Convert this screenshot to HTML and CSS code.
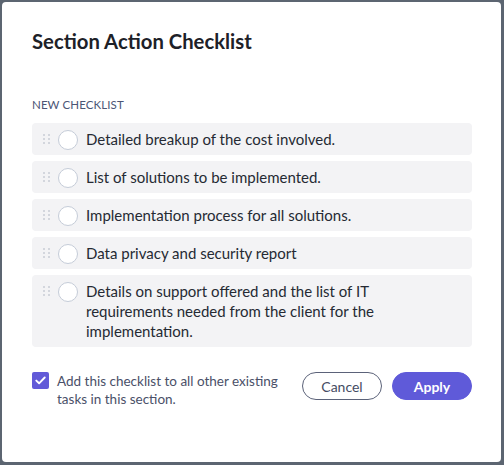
FILE: index.html
```html
<!DOCTYPE html>
<html lang="en">
<head>
<meta charset="utf-8">
<title>Section Action Checklist</title>
<link rel="stylesheet" href="styles.css">
</head>
<body>
<div class="backdrop">
  <div class="modal">
    <h1 class="title">Section Action Checklist</h1>
    <div class="section-label">NEW CHECKLIST</div>
    <ul class="checklist">
      <li class="item">
        <span class="handle"><i></i><i></i><i></i><i></i><i></i><i></i></span>
        <span class="circle"></span>
        <span class="text">Detailed breakup of the cost involved.</span>
      </li>
      <li class="item">
        <span class="handle"><i></i><i></i><i></i><i></i><i></i><i></i></span>
        <span class="circle"></span>
        <span class="text">List of solutions to be implemented.</span>
      </li>
      <li class="item">
        <span class="handle"><i></i><i></i><i></i><i></i><i></i><i></i></span>
        <span class="circle"></span>
        <span class="text">Implementation process for all solutions.</span>
      </li>
      <li class="item">
        <span class="handle"><i></i><i></i><i></i><i></i><i></i><i></i></span>
        <span class="circle"></span>
        <span class="text">Data privacy and security report</span>
      </li>
      <li class="item">
        <span class="handle"><i></i><i></i><i></i><i></i><i></i><i></i></span>
        <span class="circle"></span>
        <span class="text">Details on support offered and the list of IT requirements needed from the client for the implementation.</span>
      </li>
    </ul>
    <div class="footer">
      <label class="check">
        <span class="box">
          <svg width="11" height="9" viewBox="0 0 11 9"><path d="M1.3 4.6 L4.1 7.3 L9.7 1.5" fill="none" stroke="#fff" stroke-width="1.9" stroke-linecap="round" stroke-linejoin="round"/></svg>
        </span>
        <span class="check-text">Add this checklist to all other existing tasks in this section.</span>
      </label>
      <div class="actions">
        <button class="btn btn-cancel">Cancel</button>
        <button class="btn btn-apply">Apply</button>
      </div>
    </div>
  </div>
</div>
</body>
</html>
```
FILE: styles.css
```css
* { box-sizing: border-box; }
html, body { margin: 0; padding: 0; }
body {
  background: #5c6571;
  font-family: Lato, "Open Sans", "Liberation Sans", sans-serif;
  width: 504px;
  height: 465px;
  overflow: hidden;
}
.backdrop {
  padding: 2px 3px 3px 2px;
}
.modal {
  background: #ffffff;
  width: 499px;
  height: 460px;
  border-radius: 4px;
  padding: 27px 29px 0 30px;
}
.title {
  margin: 0;
  font-size: 20.3px;
  line-height: 24px;
  font-weight: 700;
  color: #1d2128;
}
.section-label {
  margin-top: 45px;
  font-size: 11.5px;
  line-height: 14px;
  color: #4b5575;
  letter-spacing: 0.1px;
}
.checklist {
  list-style: none;
  margin: 11px 0 0 0;
  padding: 0;
  display: flex;
  flex-direction: column;
  gap: 6px;
}
.item {
  display: flex;
  align-items: flex-start;
  background: #f3f3f5;
  border-radius: 4px;
  padding: 6px 12px 6px 11px;
}
.handle {
  width: 7px;
  display: grid;
  grid-template-columns: 2px 2px;
  grid-auto-rows: 2px;
  column-gap: 3px;
  row-gap: 2px;
  margin-top: 5px;
  flex: none;
}
.handle i {
  display: block;
  width: 2px;
  height: 2px;
  background: #c9cdd5;
  border-radius: 1px;
}
.circle {
  flex: none;
  width: 20px;
  height: 20px;
  border: 1px solid #c5ccd8;
  border-radius: 50%;
  background: #fff;
  margin-left: 8px;
  margin-top: 1px;
  margin-bottom: -1px;
}
.text {
  margin-left: 8px;
  max-width: 300px;
  font-size: 15px;
  line-height: 20px;
  color: #252a33;
}
.footer {
  margin-top: 25px;
  display: flex;
  align-items: flex-start;
  justify-content: space-between;
}
.check {
  display: flex;
  align-items: flex-start;
}
.box {
  flex: none;
  width: 17px;
  height: 17px;
  background: #625ad8;
  border-radius: 2px;
  display: flex;
  align-items: center;
  justify-content: center;
}
.check-text {
  margin-left: 8px;
  width: 226px;
  font-size: 13.5px;
  line-height: 18.3px;
  color: #4a5068;
}
.actions {
  display: flex;
  gap: 10px;
}
.btn {
  width: 80px;
  height: 28px;
  border-radius: 14px;
  font-family: Lato, "Open Sans", "Liberation Sans", sans-serif;
  font-size: 14px;
  padding: 0;
  cursor: pointer;
}
.btn-cancel {
  background: #fff;
  border: 1px solid #5b6279;
  color: #454c63;
}
.btn-apply {
  background: #5f5ad9;
  border: 1px solid #5f5ad9;
  color: #fff;
  font-weight: 700;
}
```
